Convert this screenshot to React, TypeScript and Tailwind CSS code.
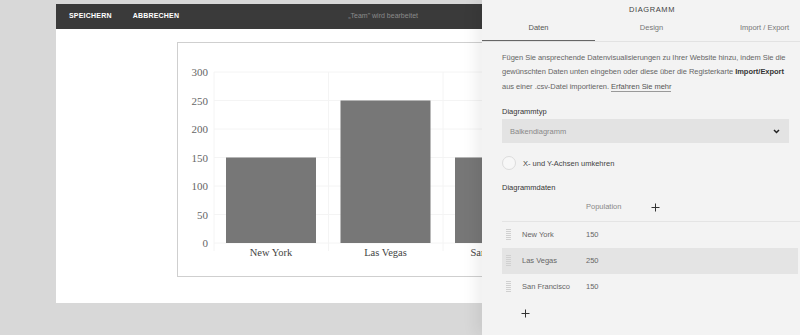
import React from "react";

const ticks = [300, 250, 200, 150, 100, 50, 0];
const data = [
  { name: "New York", v: 150 },
  { name: "Las Vegas", v: 250 },
  { name: "San Francisco", v: 150 },
];

function Chart() {
  const y0 = 200;
  const k = 171 / 300;
  const colW = 114.5;
  const x0 = 36;
  return (
    <svg width="420" height="233" className="block">
      {ticks.map((t) => (
        <g key={t}>
          <line x1={x0} x2={420} y1={y0 - t * k} y2={y0 - t * k} stroke="#f4f4f4" strokeWidth="1" />
          <text x={30} y={y0 - t * k + 4} textAnchor="end" fontFamily="'Liberation Serif', serif" fontSize="11" fill="#666">
            {t}
          </text>
        </g>
      ))}
      {[0, 1, 2, 3].map((i) => (
        <line key={i} x1={x0 + i * colW} x2={x0 + i * colW} y1={29} y2={y0 + 8} stroke="#f4f4f4" strokeWidth="1" />
      ))}
      {data.map((d, i) => (
        <g key={d.name}>
          <rect x={x0 + i * colW + 12} y={y0 - d.v * k} width={90} height={d.v * k} fill="#777777" />
          <text x={x0 + i * colW + 57} y={213} textAnchor="middle" fontFamily="'Liberation Serif', serif" fontSize="10.5" fill="#444">
            {d.name}
          </text>
        </g>
      ))}
    </svg>
  );
}

function Grip() {
  return (
    <svg width="5" height="11" viewBox="0 0 5 11" className="block">
      {[0, 2, 4, 6, 8, 10].map((y) => (
        <rect key={y} x="0" y={y} width="5" height="1" fill="#d0d0d0" />
      ))}
    </svg>
  );
}

function Plus({ size = 9 }: { size?: number }) {
  return (
    <svg width={size} height={size} viewBox="0 0 9 9" className="block">
      <path d="M4.5 0.5v8M0.5 4.5h8" stroke="#333" strokeWidth="1" />
    </svg>
  );
}

export default function App() {
  return (
    <div className="relative h-[335px] w-[800px] overflow-hidden bg-[#d8d8d8]" style={{ fontFamily: "'Liberation Sans', Arial, sans-serif" }}>
      {/* editor */}
      <div className="ml-[56px] pt-[4px]">
        <div className="flex h-[25px] items-center bg-[#3a3a3a] pl-[13px]">
          <span className="text-[7px] font-bold tracking-[0.2px] text-white">SPEICHERN</span>
          <span className="ml-[21px] text-[7px] font-bold tracking-[0.2px] text-white">ABBRECHEN</span>
          <span className="ml-[169px] text-[7px] text-[#8a8a8a]">„Team" wird bearbeitet</span>
        </div>
        <div className="h-[274px] bg-white pt-[13px] pl-[121px]">
          <div className="w-[440px] border border-[#cfcfcf] bg-white">
            <Chart />
          </div>
        </div>
      </div>

      {/* side panel overlay */}
      <div className="absolute top-0 left-[482px] h-[335px] w-[340px] bg-[#f3f3f3] shadow-[-6px_0_14px_rgba(0,0,0,0.07)]">
        <div className="pt-[4px] text-center text-[7.5px] tracking-[0.6px] text-[#444]">DIAGRAMM</div>
        <div className="mt-[7px] flex border-b border-[#e2e2e2]">
          <div className="w-[113px] border-b-[1.5px] border-[#666] pb-[6px] text-center text-[7.5px] text-[#555]">Daten</div>
          <div className="w-[113px] pb-[6px] text-center text-[7.5px] text-[#777]">Design</div>
          <div className="w-[113px] pb-[6px] text-center text-[7.5px] text-[#777]">Import / Export</div>
        </div>
        <div className="pl-[20px] pr-[31px]">
          <p className="mt-[9px] text-[7.5px] leading-[14.5px] tracking-[-0.03px] text-[#666]">
            Fügen Sie ansprechende Datenvisualisierungen zu Ihrer Website hinzu, indem Sie die gewünschten Daten unten eingeben oder diese über die Registerkarte{" "}
            <span className="font-bold text-[#333]">Import/Export</span> aus einer .csv-Datei importieren.{" "}
            <span className="border-b border-[#999] text-[#555]">Erfahren Sie mehr</span>
          </p>
          <div className="mt-[12px] text-[7.5px] text-[#333]">Diagrammtyp</div>
          <div className="mt-[2px] flex h-[24px] w-[287px] items-center justify-between bg-[#e3e3e3] pl-[8px] pr-[9px]">
            <span className="text-[7.5px] text-[#888]">Balkendiagramm</span>
            <svg width="7" height="5" viewBox="0 0 7 5">
              <path d="M1 1l2.5 2.5L6 1" stroke="#222" strokeWidth="1.5" fill="none" />
            </svg>
          </div>
          <div className="mt-[13px] flex items-center">
            <div className="h-[14px] w-[14px] rounded-full border border-[#dcdcdc] bg-[#f7f7f7]" />
            <span className="ml-[7px] text-[7.5px] text-[#444]">X- und Y-Achsen umkehren</span>
          </div>
          <div className="mt-[12px] text-[7.5px] text-[#333]">Diagrammdaten</div>
        </div>
        <div className="ml-[20px]">
          <div className="flex h-[28px] items-center border-b border-[#e4e4e4]">
            <span className="ml-[84px] text-[7.5px] text-[#888]">Population</span>
            <span className="ml-[30px]"><Plus /></span>
          </div>
          {data.map((d, i) => (
            <div key={d.name} className={`flex h-[26px] items-center ${i === 1 ? "bg-[#e4e4e4]" : ""} w-[296px]`}>
              <span className="ml-[4px]"><Grip /></span>
              <span className="ml-[11px] w-[64px] text-[7.5px] text-[#666]">{d.name}</span>
              <span className="text-[7.5px] text-[#666]">{d.v}</span>
            </div>
          ))}
          <div className="ml-[19px] mt-[9px]"><Plus /></div>
        </div>
      </div>
    </div>
  );
}
